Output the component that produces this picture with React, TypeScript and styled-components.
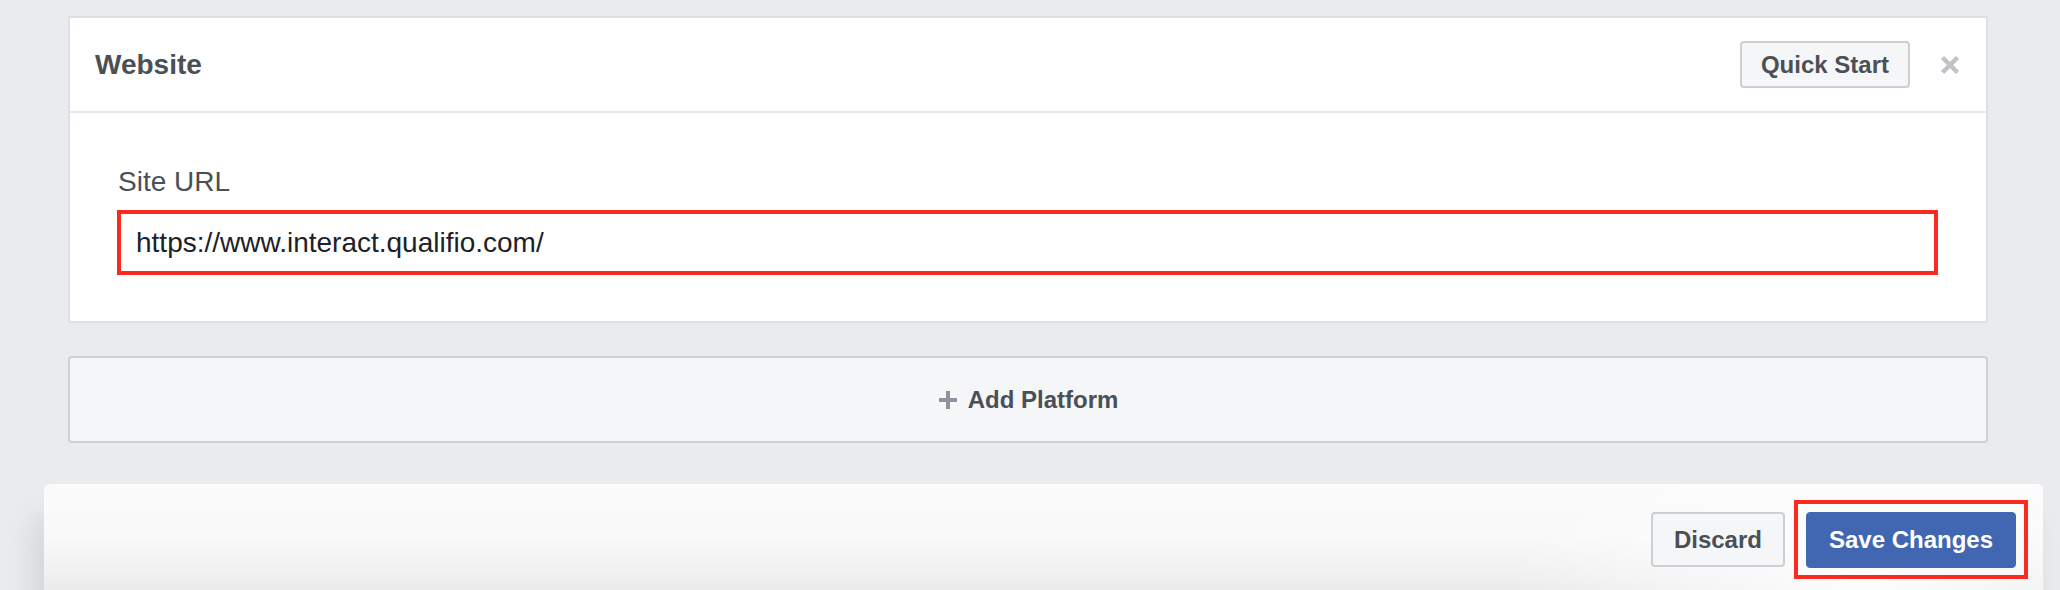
import React from 'react';
import styled, { createGlobalStyle } from 'styled-components';

const GlobalStyle = createGlobalStyle`
	html, body {
		margin: 0;
		padding: 0;
		background: #e9ebee;
	}
	* {
		box-sizing: border-box;
	}
`;

const Page = styled.div`
	width: 2060px;
	height: 590px;
	overflow: hidden;
	background: #e9ebee;
	padding-top: 16px;
	font-family: 'Liberation Sans', Arial, Helvetica, sans-serif;
	color: #4b4f56;
`;

const Column = styled.div`
	width: 1920px;
	margin-left: 68px;
`;

const Card = styled.div`
	background: #fff;
	border: 2px solid #dddfe2;
`;

const CardHeader = styled.div`
	height: 95px;
	padding: 0 26px 0 25px;
	border-bottom: 2px solid #e5e6e9;
	display: flex;
	align-items: center;
	justify-content: space-between;
`;

const Title = styled.div`
	font-size: 28px;
	font-weight: 700;
	color: #4b4f56;
`;

const HeaderActions = styled.div`
	display: flex;
	align-items: center;
	gap: 30px;
`;

const Button = styled.button<{ $primary?: boolean }>`
	font-family: 'Liberation Sans', Arial, Helvetica, sans-serif;
	font-size: 24px;
	font-weight: 700;
	border-radius: 4px;
	cursor: pointer;
	display: inline-flex;
	align-items: center;
	justify-content: center;
	background: ${({ $primary }) => ($primary ? '#4267b2' : '#f5f6f7')};
	color: ${({ $primary }) => ($primary ? '#fff' : '#4b4f56')};
	border: ${({ $primary }) => ($primary ? '1px solid #4267b2' : '2px solid #ccd0d5')};
`;

const QuickStart = styled(Button)`
	height: 47px;
	padding: 0 19px;
`;

const CloseButton = styled.span`
	width: 20px;
	height: 20px;
	display: flex;
	cursor: pointer;
`;

const CardBody = styled.div`
	padding: 53px 48px 46px 47px;
`;

const FieldLabel = styled.div`
	font-size: 28px;
	line-height: 32px;
	padding-left: 1px;
	color: #4b4f56;
`;

const UrlInput = styled.input`
	display: block;
	width: 100%;
	height: 65px;
	margin-top: 12px;
	padding: 0 15px;
	border: 4px solid #fb2a1f;
	border-radius: 0;
	outline: none;
	background: #fff;
	font-family: 'Liberation Sans', Arial, Helvetica, sans-serif;
	font-size: 28px;
	color: #1d2129;
`;

const AddPlatform = styled.div`
	margin-top: 33px;
	height: 87px;
	background: #f5f6f7;
	border: 2px solid #ccd0d5;
	border-radius: 4px;
	display: flex;
	align-items: center;
	justify-content: center;
	gap: 10px;
	font-size: 24px;
	font-weight: 700;
	color: #4b4f56;
	cursor: pointer;
`;

const Footer = styled.div`
	width: 1999px;
	min-height: 130px;
	margin: 41px 0 0 44px;
	padding: 16px 15px 0 0;
	border-radius: 6px 6px 0 0;
	background:
		radial-gradient(ellipse 360px 140px at 91% 75%, rgba(255, 255, 255, 0.9), rgba(255, 255, 255, 0)),
		linear-gradient(180deg, #fbfbfb 0%, #f9f9f9 40%, #efefef 72%, #e2e2e2 100%);
	box-shadow: -10px 34px 30px rgba(0, 0, 0, 0.1);
	display: flex;
	justify-content: flex-end;
	align-items: flex-start;
`;

const FooterActions = styled.div`
	display: flex;
	align-items: center;
	gap: 9px;
`;

const Discard = styled(Button)`
	height: 55px;
	padding: 0 21px;
`;

const Highlight = styled.div`
	border: 4px solid #fb2a1f;
	padding: 8px 8px 7px;
`;

const Save = styled(Button)`
	height: 56px;
	padding: 0 22px;
`;

const CloseIcon = () => (
	<svg width="20" height="20" viewBox="0 0 20 20">
		<path d="M2.5 2.5 L17.5 17.5 M17.5 2.5 L2.5 17.5" stroke="#bec3c9" strokeWidth="4.5" strokeLinecap="butt" />
	</svg>
);

const PlusIcon = () => (
	<svg width="20" height="20" viewBox="0 0 20 20">
		<path d="M10 1 V19 M1 10 H19" stroke="#8d949e" strokeWidth="4" />
	</svg>
);

const App: React.FC = () => {
	return (
		<>
			<GlobalStyle />
			<Page>
				<Column>
					<Card>
						<CardHeader>
							<Title>Website</Title>
							<HeaderActions>
								<QuickStart>Quick Start</QuickStart>
								<CloseButton>
									<CloseIcon />
								</CloseButton>
							</HeaderActions>
						</CardHeader>
						<CardBody>
							<FieldLabel>Site URL</FieldLabel>
							<UrlInput readOnly defaultValue="https://www.interact.qualifio.com/" />
						</CardBody>
					</Card>
					<AddPlatform>
						<PlusIcon />
						Add Platform
					</AddPlatform>
				</Column>
				<Footer>
					<FooterActions>
						<Discard>Discard</Discard>
						<Highlight>
							<Save $primary>Save Changes</Save>
						</Highlight>
					</FooterActions>
				</Footer>
			</Page>
		</>
	);
};

export default App;
